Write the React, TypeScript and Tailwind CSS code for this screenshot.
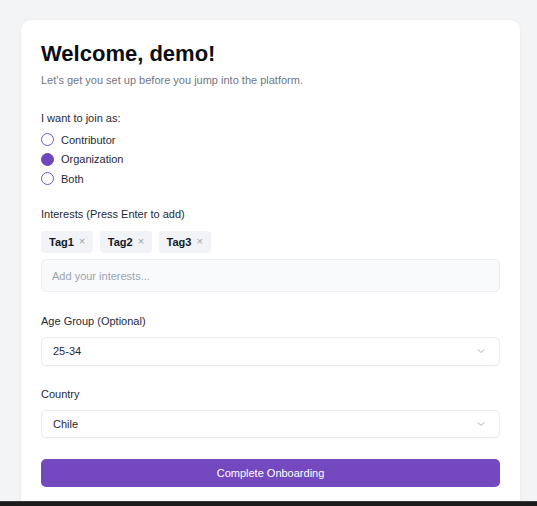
import { useState } from "react";
import { ChevronDown } from "lucide-react";

const roles = ["Contributor", "Organization", "Both"];

function Radio({ label, checked, onSelect }: { label: string; checked: boolean; onSelect: () => void }) {
  return (
    <label onClick={onSelect} className="flex h-[19.5px] cursor-pointer items-center gap-[7px]">
      <span
        className={`block h-[13px] w-[13px] rounded-full border ${
          checked ? "border-[#6a45b8] bg-[#6c47bf]" : "border-[#7a55c6] bg-white"
        }`}
      />
      <span className="text-[11px] text-[#1f2937]">{label}</span>
    </label>
  );
}

function Select({ value }: { value: string }) {
  return (
    <div className="flex h-[28.5px] items-center justify-between rounded-[5px] border border-[#e9ebef] bg-white pl-[11px] pr-[12px] shadow-[0_1px_1px_rgba(0,0,0,0.03)]">
      <span className="text-[11px] text-[#1f2937]">{value}</span>
      <ChevronDown size={12} strokeWidth={1.5} className="text-[#8b919b]" />
    </div>
  );
}

export default function App() {
  const [role, setRole] = useState("Organization");
  const [tags, setTags] = useState(["Tag1", "Tag2", "Tag3"]);

  return (
    <div className="flex h-[506px] flex-col overflow-hidden bg-[#f3f4f6] font-['Liberation_Sans',Arial,sans-serif]">
      <div className="flex-1 overflow-hidden pl-[21px] pt-5">
        <div className="h-[520px] w-[499px] rounded-[10px] bg-white px-5 pt-5 shadow-[0_0_3px_rgba(0,0,0,0.06)]">
          <h1 className="text-[22px] font-bold leading-[28px] text-[#0b0d17]">Welcome, demo!</h1>
          <p className="mt-[4px] text-[11px] leading-4 text-[#707684]">
            Let's get you set up before you jump into the platform.
          </p>

          <p className="mt-[22px] text-[11px] leading-4 text-[#1f2937]">I want to join as:</p>
          <div className="mt-[4px] flex flex-col">
            {roles.map((r) => (
              <Radio key={r} label={r} checked={role === r} onSelect={() => setRole(r)} />
            ))}
          </div>

          <p className="mt-[17px] text-[11px] leading-4 text-[#1f2937]">Interests (Press Enter to add)</p>
          <div className="mt-[9px] flex gap-[6.5px]">
            {tags.map((t) => (
              <span
                key={t}
                className="flex h-[22.5px] items-center gap-[5px] rounded-[4px] bg-[#f1f3f6] pl-2 pr-[8px] text-[11px] font-bold text-[#111827]"
              >
                {t}
                <button
                  onClick={() => setTags(tags.filter((x) => x !== t))}
                  className="text-[11px] font-normal leading-none text-[#9ca3af]"
                >
                  ×
                </button>
              </span>
            ))}
          </div>
          <input
            placeholder="Add your interests..."
            className="mt-[6px] block h-[33px] w-full rounded-[5px] border border-[#eceef1] bg-[#f9fafb] px-[10px] text-[11px] text-[#1f2937] outline-none placeholder:text-[#9ca3af]"
          />

          <p className="mt-[21px] text-[11px] leading-4 text-[#1f2937]">Age Group (Optional)</p>
          <div className="mt-[8px]">
            <Select value="25-34" />
          </div>

          <p className="mt-[20px] text-[11px] leading-4 text-[#1f2937]">Country</p>
          <div className="mt-[8px]">
            <Select value="Chile" />
          </div>

          <button className="mt-[21px] flex h-[28px] w-full items-center justify-center rounded-[5px] bg-[#7449bf] text-[11px] text-white">
            Complete Onboarding
          </button>
        </div>
      </div>
      <div className="h-[5px] border-t border-[#3b3b3b] bg-[#1c1c1c]" />
    </div>
  );
}
